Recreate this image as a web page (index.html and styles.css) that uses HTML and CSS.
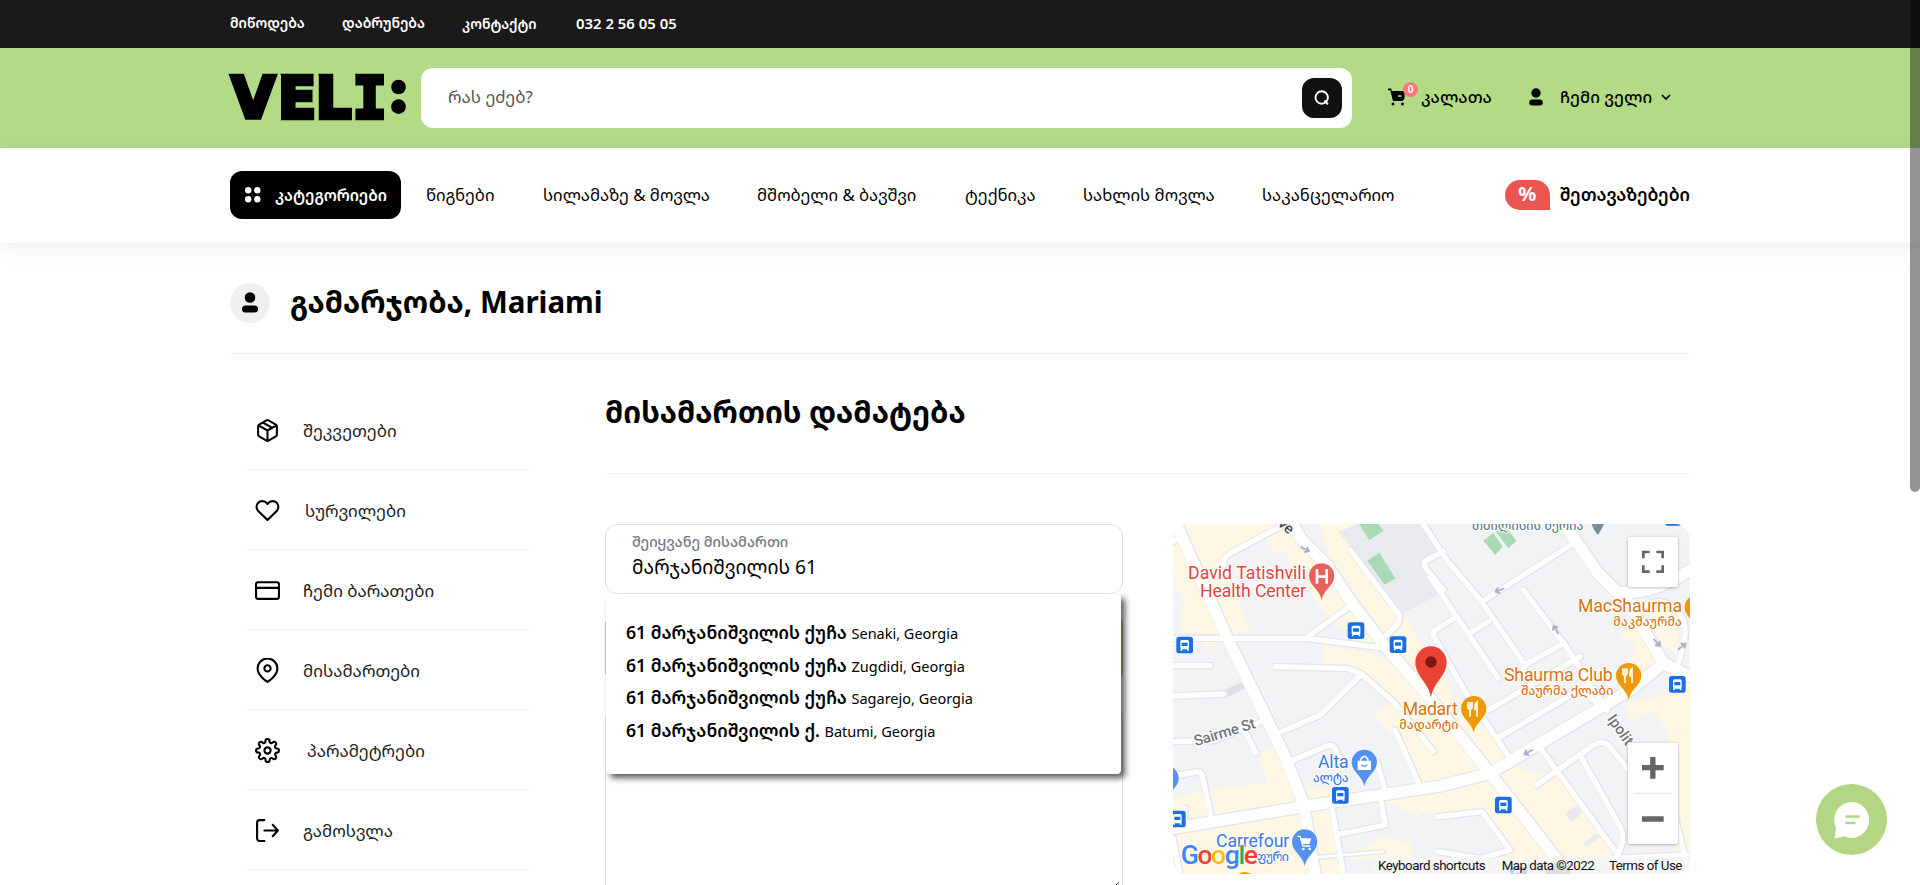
FILE: index.html
```html
<!DOCTYPE html>
<html lang="ka">
<head>
<meta charset="utf-8">
<title>VELI</title>
<link rel="stylesheet" href="styles.css">
</head>
<body>
<div class="topbar"><div class="wrap topbar-in">
  <a class="t1">მიწოდება</a><a class="t2">დაბრუნება</a><a class="t3">კონტაქტი</a><a class="phone">032 2 56 05 05</a>
</div></div>
<header class="header"><div class="wrap header-in">
  <svg class="logo" viewBox="30 225 527 135" width="176" height="45">
    <text class="logo-text" y="355" x="33 172 285 397">VEL<tspan class="slab">I</tspan></text>
    <path class="cut" d="M292 225v135M179 225v135M402 225v135"/>
    <circle cx="535" cy="261" r="22"/><circle cx="535" cy="320" r="22"/>
  </svg>
  <div class="search"><span>რას ეძებ?</span>
    <button class="search-btn"><svg width="16" height="16" viewBox="0 0 16 16"><circle cx="7.700" cy="7.500" r="6.200"/><path d="M10.500 10.500l3.500 3.800"/></svg></button>
  </div>
  <a class="cart">
    <svg width="18" height="18" viewBox="0 0 18 18"><path d="M0 .5h3.200l.6 2.500H16.500v7.500l-2 2.500H5L2.300 2.200H0z"/><circle cx="5" cy="16" r="1.500"/><circle cx="14.500" cy="16" r="1.500"/><path class="hole" d="M10 8h3.500"/></svg>
    <span class="count">0</span><span>კალათა</span></a>
  <a class="me"><svg width="14" height="18" viewBox="0 0 14 18"><circle cx="7" cy="5" r="4.700"/><rect x=".2" y="11.500" width="13.600" height="6" rx="3"/></svg><span>ჩემი ველი</span>
    <svg class="chev" width="10" height="7" viewBox="0 0 10 7"><path d="M1 1l4 4 4-4"/></svg></a>
</div></header>
<nav class="nav"><div class="wrap nav-in">
  <button class="cat"><svg width="16" height="16" viewBox="0 0 16 16"><circle cx="3.200" cy="3.200" r="3.200"/><circle cx="12.300" cy="3.200" r="3.200"/><circle cx="3.200" cy="12.300" r="3.200"/><circle cx="12.300" cy="12.300" r="3.200"/></svg><span>კატეგორიები</span></button>
  <a class="n1">წიგნები</a><a class="n2">სილამაზე &amp; მოვლა</a><a class="n3">მშობელი &amp; ბავშვი</a><a class="n4">ტექნიკა</a><a class="n5">სახლის მოვლა</a><a class="n6">საკანცელარიო</a>
  <div class="offers"><span class="pct">%</span><b>შეთავაზებები</b></div>
</div></nav>
<main class="wrap">
  <div class="hello"><span class="avatar"><svg width="16" height="21" viewBox="0 0 16 21"><circle cx="8" cy="5.500" r="5.300"/><rect y="13.500" width="16" height="7" rx="3.500"/></svg></span><h1>გამარჯობა, Mariami</h1></div>
  <div class="cols">
    <ul class="side">
      <li><svg viewBox="0 0 24 24"><path d="M21 8a2 2 0 0 0-1-1.700l-7-4a2 2 0 0 0-2 0l-7 4A2 2 0 0 0 3 8v8a2 2 0 0 0 1 1.700l7 4a2 2 0 0 0 2 0l7-4a2 2 0 0 0 1-1.700zM3.300 7L12 12l8.700-5M12 22V12M7.500 4.300l9 5.100"/></svg><span>შეკვეთები</span></li>
      <li><svg viewBox="0 0 24 24"><path d="M20.800 4.600a5.500 5.500 0 0 0-7.800 0L12 5.700l-1.100-1.100a5.500 5.500 0 0 0-7.800 7.800L12 21.200l8.800-8.800a5.500 5.500 0 0 0 0-7.800z"/></svg><span class="in1">სურვილები</span></li>
      <li><svg viewBox="0 0 24 24"><rect x="1" y="4" width="22" height="16" rx="2"/><path d="M1 9.500h22"/></svg><span>ჩემი ბარათები</span></li>
      <li><svg viewBox="0 0 24 24"><path d="M21.500 10c0 7-9.500 13-9.500 13S2.500 17 2.500 10a9.500 9.500 0 0 1 19 0z"/><circle cx="12" cy="10" r="3"/></svg><span>მისამართები</span></li>
      <li><svg viewBox="0 0 24 24"><circle cx="12" cy="12" r="3"/><path d="M19.400 15a1.650 1.650 0 0 0 .33 1.820l.06.06a2 2 0 1 1-2.830 2.830l-.06-.06a1.650 1.650 0 0 0-2.800 1.180V21a2 2 0 0 1-4 0v-.09a1.650 1.650 0 0 0-2.900-1.180l-.06.06a2 2 0 1 1-2.830-2.830l.06-.06A1.650 1.650 0 0 0 3.100 14H3a2 2 0 0 1 0-4h.09a1.650 1.650 0 0 0 1.180-2.900l-.06-.06a2 2 0 1 1 2.830-2.830l.06.06A1.650 1.650 0 0 0 10 3.100V3a2 2 0 0 1 4 0v.09a1.650 1.650 0 0 0 2.900 1.180l.06-.06a2 2 0 1 1 2.830 2.830l-.06.06A1.650 1.650 0 0 0 20.900 10H21a2 2 0 0 1 0 4h-.09a1.650 1.650 0 0 0-1.510 1z"/></svg><span class="in2">პარამეტრები</span></li>
      <li><svg viewBox="0 0 24 24"><path d="M9 22H4.500A2.500 2.500 0 0 1 2 19.500v-15A2.500 2.500 0 0 1 4.500 2H9M17 17.500l5-5.500-5-5.500M22 12H9"/></svg><span>გამოსვლა</span></li>
    </ul>
    <section class="content">
      <h2>მისამართის დამატება</h2>
      <div class="grid">
        <form class="form">
          <div class="field"><label>შეიყვანე მისამართი</label><span>მარჯანიშვილის 61</span></div>
          <div class="submit"></div>
          <div class="area"><svg width="8" height="8" viewBox="0 0 8 8"><path d="M0 8L8 0M4 8l4-4"/></svg></div>
          <div class="drop">
            <div><b>61 მარჯანიშვილის ქუჩა</b> <small>Senaki, Georgia</small></div>
            <div><b>61 მარჯანიშვილის ქუჩა</b> <small>Zugdidi, Georgia</small></div>
            <div><b>61 მარჯანიშვილის ქუჩა</b> <small>Sagarejo, Georgia</small></div>
            <div><b>61 მარჯანიშვილის ქ.</b> <small>Batumi, Georgia</small></div>
          </div>
        </form>
        <svg class="map" viewBox="39 42 1551 1050" width="517" height="350">
          <defs>
            <g id="bus"><rect x="-25" y="-25" width="50" height="50" rx="8" fill="#1a6fe3"/><rect x="-13" y="-15" width="26" height="28" rx="5" fill="#fff"/><path d="M-9-7H9V3H-9z" fill="#1a6fe3"/><path d="M-10 12v5M10 12v5" stroke="#fff" stroke-width="5"/></g>
            <path id="pin" d="M0 72C-6 40-38 28-38 0a38 38 0 0 1 76 0C38 28 6 40 0 72z"/>
            <path id="fork" d="M-14-22v14q0 7 6 7v23M-8-22v20M-2-22v14q0 7-6 7M13-22q-7 6-6 22h6v22z" fill="none" stroke="#fff" stroke-width="5"/>
            <path id="arrow" d="M-14 0H12M3-9l11 9-11 9" fill="none" stroke="#a9b0cc" stroke-width="6"/>
            <g id="roads">
              <g class="major"><path d="M385 20L425 90 500 165 580 285 680 415 810 565 870 640 990 790 1200 1060"/><path d="M48 42L200 380 285 555 375 740 430 880 465 1092"/><path d="M39 955L430 890 840 828 990 790 1140 700 1410 540 1510 460"/><path d="M1225 60L1260 110 1310 185 1370 245 1400 270 1510 460 1590 500M1370 245Q1470 260 1590 180"/></g>
              <g class="minor">
                <path d="M39 385H440L680 415M440 382L575 285M39 95L60 80M190 165Q190 140 210 130L370 45M39 467H150M39 558L190 552M345 470L560 475 605 492 700 575 820 725M605 492L480 615 365 665"/>
                <path d="M570 120L718 315Q722 335 708 348L680 375M39 695L160 692 315 630M255 665L288 728M400 750L500 708Q520 700 530 725L548 775M55 795L110 786Q124 784 128 800L155 930M74 895V940"/>
                <path d="M705 660L778 825M650 755L675 840M662 865L676 945 540 972M515 890L550 1092M39 985L60 1092"/>
                <path d="M790 42L860 150 965 275 1095 465 1090 480M965 275L1240 100M1090 240L1215 405 1340 600M1095 465L1210 400M810 200L890 320 1015 505M890 320L825 360Q815 370 825 385L915 545 1050 745M935 365L985 335M850 125L800 150Q788 160 798 175L850 240"/>
                <path d="M985 600L1140 510 1260 440M1020 680L1285 525M1145 720L1370 1030M1130 825L1300 705Q1325 690 1345 705L1415 790M1260 735L1380 950Q1398 985 1375 1030M835 920L965 905 1050 1020 960 1045 835 1025M1275 545L1310 580M1360 1045L1580 1035M1430 345Q1430 275 1500 275 1580 290 1575 380L1555 460M1550 940L1580 1060"/>
                <path class="thin" d="M470 1042L670 1025"/>
              </g>
            </g>
          </defs>
          <rect x="39" y="42" width="1551" height="1050" fill="#f1f3f4"/>
          <g fill="#fef7e4">
            <path d="M39 42H350L200 140 195 185 272 355 140 415 120 370 62 365V300L82 297 60 250 48 235 39 170z"/>
            <path d="M315 85L350 42H400L580 285 680 415 640 430 575 370 510 330 440 230 380 160 382 118 350 133zM475 42H595L535 65 740 330 850 500 900 620 960 640 1060 740 1140 850 1370 1045H1190L940 740 700 430 530 200z"/>
            <path d="M490 405L640 430 720 470 830 590 990 790 780 820 705 680 640 615 690 580 605 490 490 475zM290 735L350 710 430 880 39 955V865L190 830 325 822z"/>
            <path d="M39 955L430 890 465 1092H60zM430 830L640 850 770 835 775 920 665 870 530 890 550 1092H470zM670 980L750 1000 760 1050 1190 1060 990 790 775 830 770 905 810 910 960 895 1060 1020 840 1050 560 1045z"/>
            <path d="M1075 775L1210 800 1380 1040 1210 1050 1000 790zM1390 580L1500 560 1590 500V1060H1540L1560 920 1520 660 1480 600 1420 635zM1375 375L1450 335 1500 420 1500 470 1380 540 1430 400zM1460 300H1560L1550 430 1500 400z"/>
          </g>
          <g fill="#e8eaed"><path d="M595 42H790L850 120 790 160 860 240 730 310 535 65z"/><path d="M195 540L245 515 255 535 205 560z" fill="#dfe1e5"/><path d="M810 80L850 130 800 160zM1215 910L1260 880 1275 900 1235 940zM1270 1000L1310 970 1320 980 1280 1010z"/></g>
          <g fill="#a8dab5"><path d="M597 42H655L670 63 628 90zM622 152L658 128 706 205 674 224zM970 92L1000 68 1028 110 1006 135zM1008 65L1030 45 1070 92 1045 115z"/></g>
          <use href="#roads" class="casing"/><use href="#roads" class="fill"/>
          <use href="#arrow" transform="translate(434 117) rotate(28)"/><use href="#arrow" transform="translate(1020 240) rotate(160)"/><use href="#arrow" transform="translate(1188 360) rotate(-120)"/><use href="#arrow" transform="translate(1490 397) rotate(48)"/><use href="#arrow" transform="translate(1565 410) rotate(-40)"/><use href="#arrow" transform="translate(1106 726) rotate(150)"/>
          <use href="#bus" x="74" y="405"/><use href="#bus" x="588" y="362"/><use href="#bus" x="714" y="404"/><use href="#bus" x="541" y="856"/><use href="#bus" x="52" y="927"/><use href="#bus" x="1030" y="885"/><use href="#bus" x="1552" y="523"/><use href="#bus" x="1540" y="22"/><use href="#bus" x="1075" y="1095"/>
          <circle cx="1195" cy="1095" r="38" fill="#8a9a9e"/><circle cx="254" cy="1118" r="32" fill="#f29900"/>
          <use href="#pin" x="485" y="198" fill="#e8625c"/><path d="M471 178v43M500 178v43M471 200h29" stroke="#fff" stroke-width="8"/>
          <g fill="#f29900"><use href="#pin" x="1406" y="497"/><use href="#pin" x="941" y="596"/><use href="#pin" x="1612" y="292"/></g><use href="#fork" x="1403" y="497"/><use href="#fork" x="938" y="598"/>
          <g fill="#5491f5"><use href="#pin" x="613" y="757"/><use href="#pin" x="434" y="996"/><use href="#pin" x="18" y="805"/></g>
          <path d="M593 752h40v28h-40z" fill="#fff"/><path d="M603 752v-6q10-14 20 0v6" fill="none" stroke="#fff" stroke-width="5"/><path d="M604 764q9 10 18 0" fill="none" stroke="#5491f5" stroke-width="4"/>
          <path d="M412 979h8l9 29h22" fill="none" stroke="#fff" stroke-width="4"/><path d="M421 985h33l-6 17h-22z" fill="#fff"/><circle cx="430" cy="1017" r="4" fill="#fff"/><circle cx="449" cy="1017" r="4" fill="#fff"/>
          <path d="M1294 38h38q-2 14-19 37-17-23-19-37z" fill="#78909c"/>
          <g class="mt red"><text x="84" y="207" textLength="354">David Tatishvili</text><text x="120" y="261" textLength="318">Health Center</text></g>
          <g class="mt org"><text x="1254" y="305" textLength="312">MacShaurma</text><text x="1360" y="348" textLength="206" class="ge">მაკშაურმა</text><text x="1032" y="512" textLength="326">Shaurma Club</text><text x="1083" y="555" textLength="277" class="ge">შაურმა ქლაბი</text><text x="728" y="614" textLength="165">Madart</text><text x="718" y="656" textLength="177" class="ge">მადარტი</text></g>
          <g class="mt blu"><text x="474" y="773" textLength="92">Alta</text><text x="459" y="815" textLength="107" class="ge">ალტა</text><text x="168" y="1011" textLength="220">Carrefour</text><text x="287" y="1053" textLength="100" class="ge">ფური</text></g>
          <g class="mt gry"><text x="936" y="61" textLength="334" class="ge slate">თბილისის მერია</text><text transform="translate(107 709) rotate(-17)" textLength="190" class="st">Sairme St</text><text transform="translate(1340 626) rotate(55)" textLength="126" class="st">Ipolite</text><text transform="translate(352 44) rotate(42)" class="st dark">ve</text></g>
          <path d="M813 563C806 515 766 500 766 456a47 47 0 0 1 94 0C860 500 820 515 813 563z" fill="#ea4335"/><circle cx="813" cy="456" r="17" fill="#811411"/>
          <rect x="636" y="1042" width="954" height="50" fill="#f5f5f5" opacity=".75"/>
          <text class="google" x="62" y="1062" textLength="232"><tspan fill="#4285f4">G</tspan><tspan fill="#ea4335">o</tspan><tspan fill="#fbbc04">o</tspan><tspan fill="#4285f4">g</tspan><tspan fill="#34a853">l</tspan><tspan fill="#ea4335">e</tspan></text>
          <g class="legal"><text x="654" y="1080" textLength="323">Keyboard shortcuts</text><text x="1025" y="1080" textLength="279">Map data ©2022</text><text x="1347" y="1080" textLength="220">Terms of Use</text></g>
          <g class="ctl"><rect x="1404" y="81" width="150" height="150" rx="6"/><rect x="1404" y="699" width="150" height="303" rx="6"/></g>
          <path d="M1450 145v-19h19M1489 126h19v19M1508 166v19h-19M1469 185h-19v-19" fill="none" stroke="#666" stroke-width="8"/>
          <path d="M1446 773h65M1478.500 741v65M1446 927h65" stroke="#666" stroke-width="16"/><path d="M1422 850h111" stroke="#e6e6e6" stroke-width="3"/>
        </svg>
      </div>
    </section>
  </div>
</main>
<div class="chat"><svg width="38" height="38" viewBox="0 0 38 38"><path d="M19 1a18 18 0 1 1-8 34.500L1.500 37.500 3 27A18 18 0 0 1 19 1z"/><path class="ln" d="M13.500 15.500h12M13.500 22h8"/></svg></div>
<div class="scroll"></div>
</body>
</html>
```
FILE: styles.css
```css
* { box-sizing: border-box; }
body { margin: 0; height: 885px; overflow: hidden; background: #fff; color: #000; font-family: "Noto Sans", "Noto Sans Georgian", "DejaVu Sans", sans-serif; font-size: 16px; line-height: 24px; }
button { border: 0; padding: 0; font: inherit; }
a, span, b { white-space: nowrap; }
.wrap { width: 1460px; margin: 0 auto; }
.topbar { height: 48px; background: #1a1a1a; color: #fff; }
.topbar-in { display: flex; align-items: center; height: 45px; font-size: 14px; font-weight: 600; }
.t1 { width: 112px; } .t2 { width: 120px; } .t3 { width: 114px; padding-top: 2px; }
.phone { font-size: 14.900px; }
.header { height: 100px; background: #b3da84; }
.header-in { display: flex; align-items: center; height: 100px; font-size: 16.700px; }
.logo { margin: -1px 15px 0 0; overflow: visible; }
.logo-text { font-family: "DejaVu Sans", sans-serif; font-weight: 700; font-size: 170px; stroke: #000; stroke-width: 13px; }
.slab { font-family: "DejaVu Sans Mono", monospace; }
.cut { stroke: #b3da84; stroke-width: 7px; }
.search { width: 931px; height: 60px; border-radius: 12px; background: #fff; color: #555; display: flex; align-items: center; justify-content: space-between; padding: 0 10px 2px 27px; font-size: 16.900px; }
.search-btn { position: relative; top: 1px; width: 40px; height: 40px; border-radius: 12px; background: #111; display: flex; align-items: center; justify-content: center; }
.search-btn svg { fill: none; stroke: #fff; stroke-width: 1.900; }
.cart { position: relative; display: flex; align-items: center; gap: 15px; width: 141px; margin: -2px 0 0 36px; font-weight: 500; }
.hole { stroke: #b3da84; stroke-width: 1.500; }
.count { position: absolute; left: 15px; top: -3px; width: 15px; height: 15px; border-radius: 8px; background: #ff7777; color: #fff; font-size: 10px; font-weight: 600; line-height: 14px; text-align: center; }
.me { display: flex; align-items: center; font-weight: 500; gap: 17px; margin-top: -2px; }
.chev { margin-left: -8px; fill: none; stroke: #000; stroke-width: 1.700; }
.nav { height: 95px; background: #fff; box-shadow: 0 4px 20px rgba(100,120,150,.12); }
.nav-in { display: flex; align-items: center; height: 94px; font-size: 16.700px; }
.cat { width: 171px; height: 48px; margin-right: 25px; border-radius: 12px; background: #000; color: #fff; font-size: 15.600px; font-weight: 600; display: flex; align-items: center; padding-left: 15px; gap: 14px; }
.cat svg { fill: #fff; flex: none; }
.n1 { width: 117px; } .n2 { width: 214px; } .n3 { width: 208px; } .n4 { width: 118px; } .n5 { width: 179px; } .n6 { width: 132px; }
.offers { margin-left: auto; display: flex; align-items: center; gap: 10px; }
.offers b { font-size: 17.600px; font-weight: 600; margin-top: -2px; }
.pct { width: 45px; height: 30px; border-radius: 15px 15px 0 15px; background: #eb5652; color: #fff; font-size: 20px; font-weight: 700; line-height: 28px; text-align: center; }
.hello { height: 111px; border-bottom: 1px solid #eee; display: flex; align-items: center; gap: 20px; padding-top: 10px; }
.hello h1 { margin-top: -3px; }
.avatar { width: 40px; height: 40px; margin-top: -1px; border-radius: 50%; background: #f0f0f0; display: flex; align-items: center; justify-content: center; }
h1, h2 { margin: 0; font-size: 29.500px; line-height: 38px; font-weight: 700; white-space: nowrap; }
.cols { display: flex; }
.side { list-style: none; margin: 36px 76px 0 16px; padding: 0; width: 283px; flex: none; }
.side li { height: 80px; border-bottom: 1px solid #f0f0f0; padding: 2px 0 0 9px; display: flex; align-items: center; gap: 23px; color: #222; font-size: 16.900px; }
.side svg { width: 25px; height: 25px; fill: none; stroke: #000; stroke-width: 2; stroke-linejoin: round; stroke-linecap: round; }
.in1 { margin-left: 2px; } .in2 { margin-left: 4px; }
.content { width: 1085px; padding-top: 39px; }
h2 { height: 81px; border-bottom: 1px solid #f3f3f3; }
.grid { display: flex; gap: 50px; margin-top: 50px; }
.form { position: relative; width: 518px; flex: none; }
.field { height: 70px; border: 1px solid #dedfe5; border-radius: 12px; padding: 6px 26px; display: flex; flex-direction: column; line-height: 22px; font-size: 19.200px; }
.field label { font-size: 14.500px; font-weight: 500; color: #747a84; line-height: 20px; height: 25px; }
.submit { height: 60px; margin-top: 24px; border-radius: 6px; background: #b3da84; }
.area { height: 200px; margin-top: 30px; border: 1px solid #dedfe5; border-radius: 12px; }
.area svg { display: block; margin: 173px 0 0 505px; fill: none; stroke: #555; stroke-width: 1; }
.drop { position: absolute; left: 1px; top: 70px; width: 515px; height: 180px; border-radius: 4px; background: #fff; box-shadow: 4px 4px 6px rgba(0,0,0,.65); clip-path: inset(0 -12px -12px -4px); padding: 22px 20px; font-size: 17.600px; line-height: 32px; }
.drop b { font-weight: 600; }
.drop div { white-space: nowrap; height: 32.600px; }
.drop small { font-size: 14.500px; line-height: 1; }
.map { display: block; border-radius: 15px; overflow: hidden; font-family: Roboto, sans-serif; }
.major { stroke-width: 34px; } .minor { stroke-width: 16px; } .thin { stroke-width: 8px; }
.casing { fill: none; stroke: #dde1e6; stroke-linecap: round; stroke-linejoin: round; filter: drop-shadow(0 3px 0 #e2e5ea) drop-shadow(0 -3px 0 #e2e5ea) drop-shadow(3px 0 0 #e2e5ea); }
.fill { fill: none; stroke: #fff; stroke-linecap: round; stroke-linejoin: round; }
.mt { font-size: 53px; paint-order: stroke; stroke: #fff; stroke-width: 6px; stroke-linejoin: round; }
.ge { font-size: 37px; font-family: "Noto Sans", "Noto Sans Georgian", "DejaVu Sans", sans-serif; font-weight: 500; }
.st { font-size: 45px; font-weight: 500; }
.red { fill: #e2453f; } .org { fill: #d87511; } .blu { fill: #3b78e7; } .gry { fill: #70757a; } .slate { fill: #607d8b; } .dark { fill: #444b52; }
.google { font-size: 80px; font-weight: 500; paint-order: stroke; stroke: #fff; stroke-width: 5px; }
.legal { font-size: 40px; fill: #111; }
.ctl { fill: #fff; filter: drop-shadow(0 2px 5px rgba(0,0,0,.3)); }
.chat { position: absolute; left: 1816px; top: 784px; width: 71px; height: 71px; border-radius: 50%; background: #b3d684; display: flex; align-items: center; justify-content: center; }
.chat svg { fill: #fff; } .ln { stroke: #b3d684; stroke-width: 2.600; stroke-linecap: round; }
.scroll { position: absolute; right: 0; top: 0; width: 10px; height: 492px; border-radius: 0 0 5px 5px; background: rgba(0,0,0,.42); }
```
